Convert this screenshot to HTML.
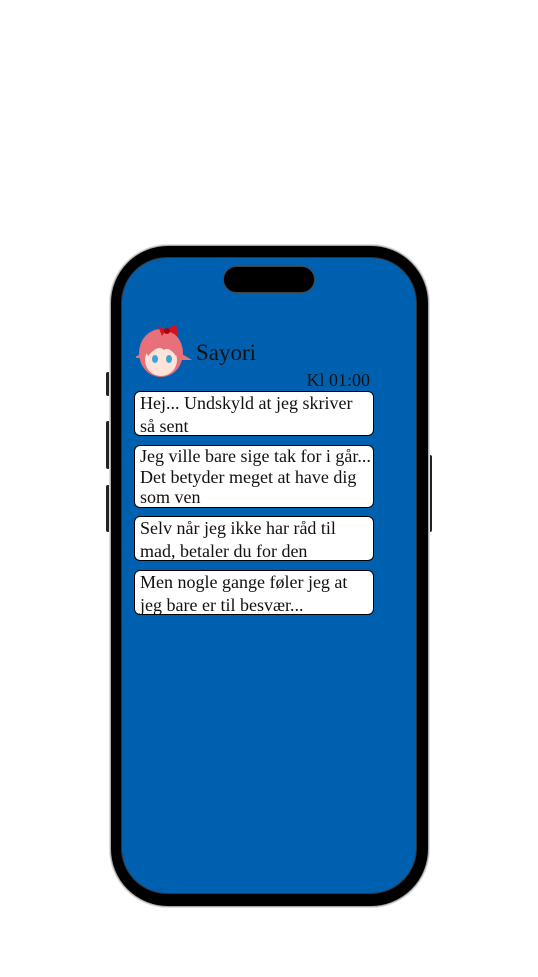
<!DOCTYPE html>
<html><head><meta charset="utf-8"><style>
body{margin:0;width:538px;height:977px;background:#fff;position:relative;overflow:hidden;font-family:"Liberation Serif",serif;}
.btn{position:absolute;background:#222;border-radius:2px;}
.phone{position:absolute;left:110px;top:245px;width:317px;height:660px;border:1px solid #aaa;border-radius:58px;background:#000;box-shadow:0 0 0 1px #ddd;}
.screen{position:absolute;left:121px;top:257px;width:296px;height:637px;border-radius:46px;background:#0060b0;border:1px solid #333;box-sizing:border-box;}
.notch{position:absolute;left:223px;top:266px;width:92px;height:27px;border-radius:14px;background:#000;border:1px solid #444;box-sizing:border-box;}
.b{position:absolute;left:134px;width:240px;background:#fff;border:1px solid #000;border-radius:6px;box-sizing:border-box;padding:0 0 0 5px;font-size:18px;line-height:23px;color:#111;white-space:nowrap;overflow:visible;}
</style></head><body>
<div class="btn" style="left:106px;top:372px;width:4px;height:24px"></div>
<div class="btn" style="left:106px;top:421px;width:4px;height:48px"></div>
<div class="btn" style="left:106px;top:485px;width:4px;height:47px"></div>
<div class="btn" style="left:428px;top:455px;width:4px;height:77px"></div>
<div class="phone"></div>
<div class="screen"></div>
<div class="notch"></div>
<svg style="position:absolute;left:136px;top:320px" width="58" height="60" viewBox="0 0 58 60">
<ellipse cx="25" cy="33" rx="22" ry="24" fill="#e8707a"/>
<ellipse cx="25" cy="40" rx="16" ry="16" fill="#fde3d8"/>
<path d="M9 30 Q25 12 42 30 L40 36 Q33 26 28 30 Q22 24 12 36Z" fill="#e8707a"/>
<ellipse cx="19" cy="39" rx="3" ry="4" fill="#3aa5d8"/>
<ellipse cx="33" cy="39" rx="3" ry="4" fill="#3aa5d8"/>
<path d="M30 10 L40 4 L42 16 Z M30 10 L22 6 L26 16Z" fill="#d8101e"/>
<circle cx="31" cy="11" r="3" fill="#b00010"/>
<path d="M4 34 L-2 38 L8 38Z M46 34 L56 40 L44 40Z" fill="#e8707a"/>
</svg>
<div style="position:absolute;left:196px;top:339px;font-size:23px;color:#111;line-height:28px">Sayori</div>
<div style="position:absolute;left:290px;top:369px;width:80px;text-align:right;font-size:18px;color:#111;line-height:22px">Kl 01:00</div>
<div class="b" style="top:391px;height:45px">Hej... Undskyld at jeg skriver<br>så sent</div>
<div class="b" style="top:445px;height:63px;line-height:20.5px">Jeg ville bare sige tak for i går...<br>Det betyder meget at have dig<br>som ven</div>
<div class="b" style="top:516px;height:45px">Selv når jeg ikke har råd til<br>mad, betaler du for den</div>
<div class="b" style="top:570px;height:45px">Men nogle gange føler jeg at<br>jeg bare er til besvær...</div>
</body></html>
